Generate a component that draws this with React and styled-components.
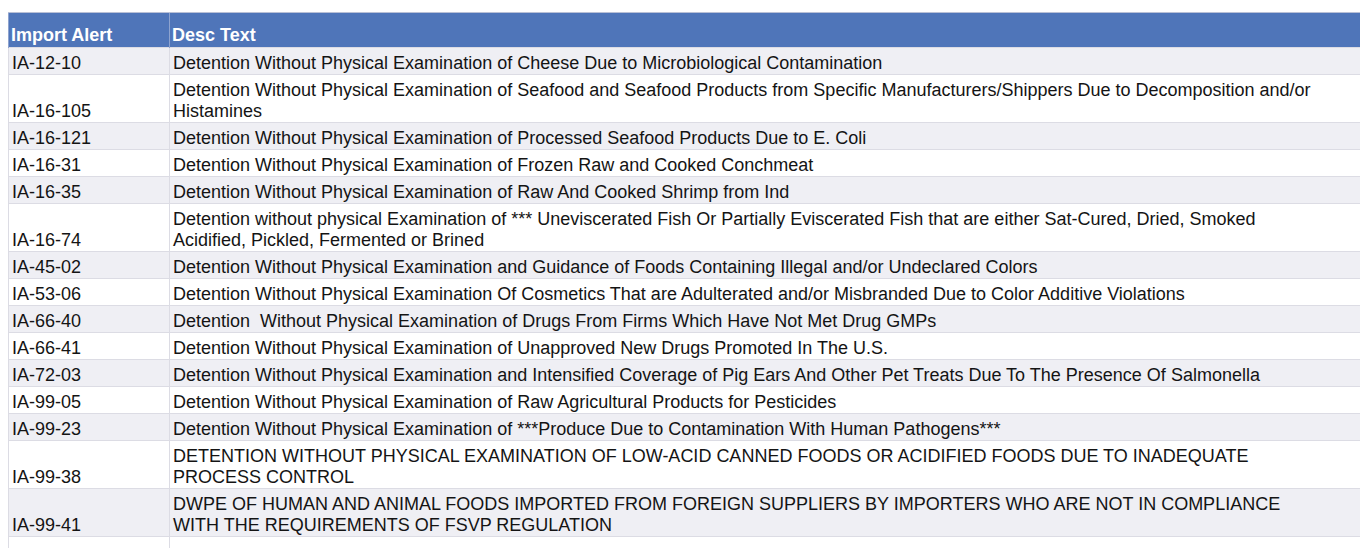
import React from "react";
import styled, { createGlobalStyle } from "styled-components";

const GlobalStyle = createGlobalStyle`
  html, body {
    margin: 0;
    padding: 0;
    background: #ffffff;
    overflow: hidden;
  }
  body {
    font-family: "Liberation Sans", Arial, sans-serif;
  }
`;

const Page = styled.div`
  padding: 12px 0 0 8px;
  width: 1400px;
`;

const Table = styled.table`
  border-collapse: collapse;
  table-layout: fixed;
  width: 1392px;
  font-size: 18px;
  line-height: 21px;
  color: #141414;
`;

const HeadCell = styled.th`
  background: #4f75b9;
  color: #ffffff;
  font-weight: 700;
  text-align: left;
  vertical-align: bottom;
  height: 35px;
  padding: 0 2px 1px 2px;
  border-top: 1px solid #b9c0d6;
  border-left: 1px solid #8ea3cf;
  box-sizing: border-box;
`;

const Row = styled.tr`
  background: ${(props) => (props.$striped ? "#efeff4" : "#ffffff")};
`;

const Cell = styled.td`
  vertical-align: bottom;
  height: ${(props) => (props.$tall ? "48px" : "27px")};
  padding: 0 2px 0 3px;
  border-top: 1px solid #dcdce4;
  border-left: 1px solid #dcdce4;
  box-sizing: border-box;
`;

const DescText = styled.div`
  max-width: 1150px;
`;

const rows = [
  ["IA-12-10", "Detention Without Physical Examination of Cheese Due to Microbiological Contamination"],
  ["IA-16-105", "Detention Without Physical Examination of Seafood and Seafood Products from Specific Manufacturers/Shippers Due to Decomposition and/or Histamines", true],
  ["IA-16-121", "Detention Without Physical Examination of Processed Seafood Products Due to E. Coli"],
  ["IA-16-31", "Detention Without Physical Examination of Frozen Raw and Cooked Conchmeat"],
  ["IA-16-35", "Detention Without Physical Examination of Raw And Cooked Shrimp from Ind"],
  ["IA-16-74", "Detention without physical Examination of *** Uneviscerated Fish Or Partially Eviscerated Fish that are either Sat-Cured, Dried, Smoked Acidified, Pickled, Fermented or Brined", true],
  ["IA-45-02", "Detention Without Physical Examination and Guidance of Foods Containing Illegal and/or Undeclared Colors"],
  ["IA-53-06", "Detention Without Physical Examination Of Cosmetics That are Adulterated and/or Misbranded Due to Color Additive Violations"],
  ["IA-66-40", "Detention\u00a0 Without Physical Examination of Drugs From Firms Which Have Not Met Drug GMPs"],
  ["IA-66-41", "Detention Without Physical Examination of Unapproved New Drugs Promoted In The U.S."],
  ["IA-72-03", "Detention Without Physical Examination and Intensified Coverage of Pig Ears And Other Pet Treats Due To The Presence Of Salmonella"],
  ["IA-99-05", "Detention Without Physical Examination of Raw Agricultural Products for Pesticides"],
  ["IA-99-23", "Detention Without Physical Examination of ***Produce Due to Contamination With Human Pathogens***"],
  ["IA-99-38", "DETENTION WITHOUT PHYSICAL EXAMINATION OF LOW-ACID CANNED FOODS OR ACIDIFIED FOODS DUE TO INADEQUATE PROCESS CONTROL", true],
  ["IA-99-41", "DWPE OF HUMAN AND ANIMAL FOODS IMPORTED FROM FOREIGN SUPPLIERS BY IMPORTERS WHO ARE NOT IN COMPLIANCE WITH THE REQUIREMENTS OF FSVP REGULATION", true],
  ["", ""],
];

const App = () => (
  <Page>
    <GlobalStyle />
    <Table>
      <colgroup>
        <col style={{ width: 161 }} />
        <col />
      </colgroup>
      <thead>
        <tr>
          <HeadCell>Import Alert</HeadCell>
          <HeadCell>Desc Text</HeadCell>
        </tr>
      </thead>
      <tbody>
        {rows.map(([id, desc, tall], i) => (
          <Row key={i} $striped={i % 2 === 0}>
            <Cell $tall={tall}>{id}</Cell>
            <Cell $tall={tall}>
              <DescText>{desc}</DescText>
            </Cell>
          </Row>
        ))}
      </tbody>
    </Table>
  </Page>
);

export default App;
